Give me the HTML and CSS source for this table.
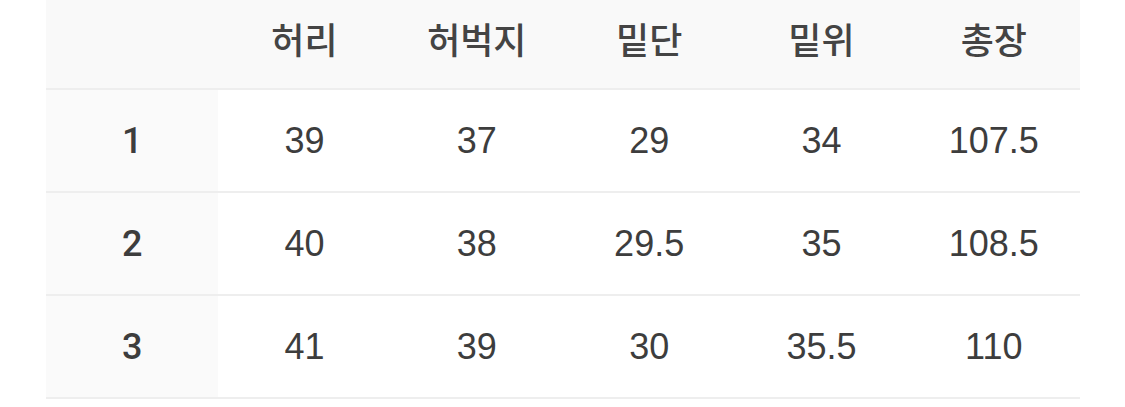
FILE: index.html
```html
<!DOCTYPE html>
<html lang="ko">
<head>
<meta charset="utf-8">
<link rel="stylesheet" href="styles.css">
</head>
<body>
<table class="size-table">
  <thead>
    <tr>
      <th class="corner"></th>
      <th>허리</th>
      <th>허벅지</th>
      <th>밑단</th>
      <th>밑위</th>
      <th>총장</th>
    </tr>
  </thead>
  <tbody>
    <tr><th class="size">1</th><td>39</td><td>37</td><td>29</td><td>34</td><td>107.5</td></tr>
    <tr><th class="size">2</th><td>40</td><td>38</td><td>29.5</td><td>35</td><td>108.5</td></tr>
    <tr><th class="size">3</th><td>41</td><td>39</td><td>30</td><td>35.5</td><td>110</td></tr>
  </tbody>
</table>
</body>
</html>
```
FILE: styles.css
```css
html, body {
  margin: 0;
  padding: 0;
  background: #ffffff;
}
body {
  font-family: "Liberation Sans", "Noto Sans CJK KR", sans-serif;
  color: #3d3d3d;
}
.size-table {
  margin-left: 46px;
  width: 1034px;
  border-collapse: collapse;
  table-layout: fixed;
}
.size-table th,
.size-table td {
  text-align: center;
  padding: 0;
  font-size: 36px;
}
.size-table thead th {
  background: #f9f9f9;
  height: 89px;
  padding-bottom: 13px;
  box-sizing: border-box;
  font-family: "Noto Sans CJK KR", sans-serif;
  font-weight: 500;
  color: #444444;
  border-bottom: 2px solid #eeeeee;
  vertical-align: middle;
}
.size-table tbody td,
.size-table tbody th {
  height: 101px;
  border-bottom: 2px solid #eeeeee;
  vertical-align: middle;
}
.size-table tbody td {
  font-weight: 400;
}
.size-table tbody th.size {
  background: #fafafa;
  font-family: "Roboto", "Liberation Sans", sans-serif;
  font-weight: 500;
}
```
